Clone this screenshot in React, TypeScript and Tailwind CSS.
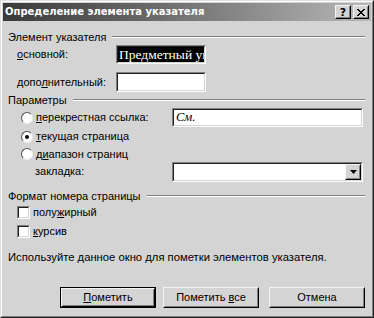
import React from "react";

const font = { fontFamily: '"Liberation Sans", Arial, sans-serif' };

function Sunken({ className, children }: { className: string; children?: React.ReactNode }) {
  return (
    <div className={`border border-t-[#808080] border-l-[#808080] border-b-white border-r-white ${className}`}>
      <div className="w-full h-full border border-t-[#202020] border-l-[#202020] border-b-[#d4d4d4] border-r-[#d4d4d4] bg-white overflow-hidden flex items-center">
        {children}
      </div>
    </div>
  );
}

function Raised({ className, children }: { className: string; children?: React.ReactNode }) {
  return (
    <div className={`border border-t-[#f4f4f4] border-l-[#f4f4f4] border-b-[#000] border-r-[#000] ${className}`}>
      <div className="w-full h-full border border-t-[#d4d4d4] border-l-[#d4d4d4] border-b-[#808080] border-r-[#808080] bg-[#d4d4d4] flex items-center justify-center">
        {children}
      </div>
    </div>
  );
}

function Header({ text }: { text: string }) {
  return (
    <div className="h-[14px] flex items-center pl-[5px] pr-[6px]">
      <span className="whitespace-nowrap">{text}</span>
      <div className="flex-1 ml-[6px] border-t border-t-[#808080] border-b border-b-white"></div>
    </div>
  );
}

function Radio({ checked }: { checked?: boolean }) {
  return (
    <span className="w-[12px] h-[12px] rounded-full bg-white flex items-center justify-center shrink-0 border border-t-[#505050] border-l-[#505050] border-b-[#ececec] border-r-[#ececec]">
      {checked && <span className="w-[4px] h-[4px] rounded-full bg-black"></span>}
    </span>
  );
}

function Check() {
  return (
    <span className="w-[13px] h-[13px] shrink-0 border border-t-[#808080] border-l-[#808080] border-b-white border-r-white">
      <span className="block w-full h-full bg-white border border-t-[#202020] border-l-[#202020] border-b-[#d4d4d4] border-r-[#d4d4d4]"></span>
    </span>
  );
}

export default function App() {
  return (
    <div className="w-[374px] h-[318px] bg-[#d4d4d4] text-black text-[11px] leading-none" style={font}>
      <div className="w-full h-full border border-t-[#e0e0e0] border-l-[#e0e0e0] border-b-[#202020] border-r-[#202020]">
        <div className="w-full h-full border border-t-white border-l-white border-b-[#808080] border-r-[#808080] p-[1px] flex flex-col">
          {/* Title bar */}
          <div className="h-[18px] shrink-0 bg-gradient-to-r from-[#3a3a3a] to-[#b8b8b8] flex items-center justify-between pl-[2px] pr-[2px]">
            <span className="text-white font-bold text-[10px]" style={{ fontFamily: '"DejaVu Sans", Verdana, sans-serif' }}>
              Определение элемента указателя
            </span>
            <div className="flex gap-[2px]">
              <Raised className="w-[16px] h-[14px]">
                <span className="font-bold text-[11px]" style={{ fontFamily: '"DejaVu Sans", sans-serif' }}>?</span>
              </Raised>
              <Raised className="w-[16px] h-[14px]">
                <svg width="8" height="7" viewBox="0 0 8 7">
                  <path d="M0 0h2v1h1v1h2V1h1V0h2v1H7v1H6v1H5v1h1v1h1v1h1v1H6V6H5V5H3v1H2v1H0V6h1V5h1V4h1V3H2V2H1V1H0z" fill="black" />
                </svg>
              </Raised>
            </div>
          </div>

          <div className="mt-[9px]">
            <Header text="Элемент указателя" />
          </div>
          <div className="mt-[1px] h-[19px] flex items-center">
            <span className="w-[113px] pl-[14px]">
              <u>о</u>сновной:
            </span>
            <Sunken className="w-[90px] h-[19px]">
              <div className="bg-black h-full w-full flex items-center pl-[1px] overflow-hidden">
                <span className="text-white text-[13.5px] whitespace-nowrap" style={{ fontFamily: '"Liberation Serif", "Times New Roman", serif' }}>
                  Предметный ук
                </span>
              </div>
            </Sunken>
          </div>
          <div className="mt-[8px] h-[20px] flex items-center">
            <span className="w-[113px] pl-[14px]">
              допо<u>л</u>нительный:
            </span>
            <Sunken className="w-[90px] h-[20px]" />
          </div>

          <div className="mt-[1px]">
            <Header text="Параметры" />
          </div>
          <div className="mt-[1px] h-[19px] flex items-center">
            <span className="w-[169px] pl-[18px] flex items-center">
              <Radio />
              <span className="ml-[3px]">
                <u>п</u>ерекрестная ссылка:
              </span>
            </span>
            <Sunken className="w-[191px] h-[19px]">
              <span className="pl-[2px] italic text-[12.5px]" style={{ fontFamily: '"Liberation Serif", "Times New Roman", serif' }}>
                См.
              </span>
            </Sunken>
          </div>
          <div className="h-[19px] flex items-center pl-[18px]">
            <Radio checked />
            <span className="ml-[3px]">
              <u>т</u>екущая страница
            </span>
          </div>
          <div className="h-[16px] flex items-center pl-[18px]">
            <Radio />
            <span className="ml-[3px]">
              д<u>и</u>апазон страниц
            </span>
          </div>
          <div className="h-[19px] flex items-center">
            <span className="w-[169px] pl-[32px]">закладка:</span>
            <Sunken className="w-[191px] h-[20px]">
              <div className="flex-1"></div>
              <Raised className="w-[16px] h-[16px]">
                <svg width="7" height="4" viewBox="0 0 7 4">
                  <path d="M0 0h7L3.5 4z" fill="black" />
                </svg>
              </Raised>
            </Sunken>
          </div>

          <div className="mt-[8px]">
            <Header text="Формат номера страницы" />
          </div>
          <div className="h-[19px] flex items-center pl-[14px]">
            <Check />
            <span className="ml-[3px]">
              полу<u>ж</u>ирный
            </span>
          </div>
          <div className="h-[19px] flex items-center pl-[14px]">
            <Check />
            <span className="ml-[3px]">
              <u>к</u>урсив
            </span>
          </div>

          <div className="mt-[10px] h-[14px] flex items-center pl-[5px] text-[11.25px]">
            Используйте данное окно для пометки элементов указателя.
          </div>

          <div className="mt-[22px] flex items-center pl-[57px] gap-[7px]">
            <div className="border border-black">
              <Raised className="w-[94px] h-[19px]">
                <span>
                  <u>П</u>ометить
                </span>
              </Raised>
            </div>
            <Raised className="w-[96px] h-[21px]">
              <span>
                Пометить <u>в</u>се
              </span>
            </Raised>
            <Raised className="w-[96px] h-[21px] ml-[3px]">
              <span>Отмена</span>
            </Raised>
          </div>
        </div>
      </div>
    </div>
  );
}
